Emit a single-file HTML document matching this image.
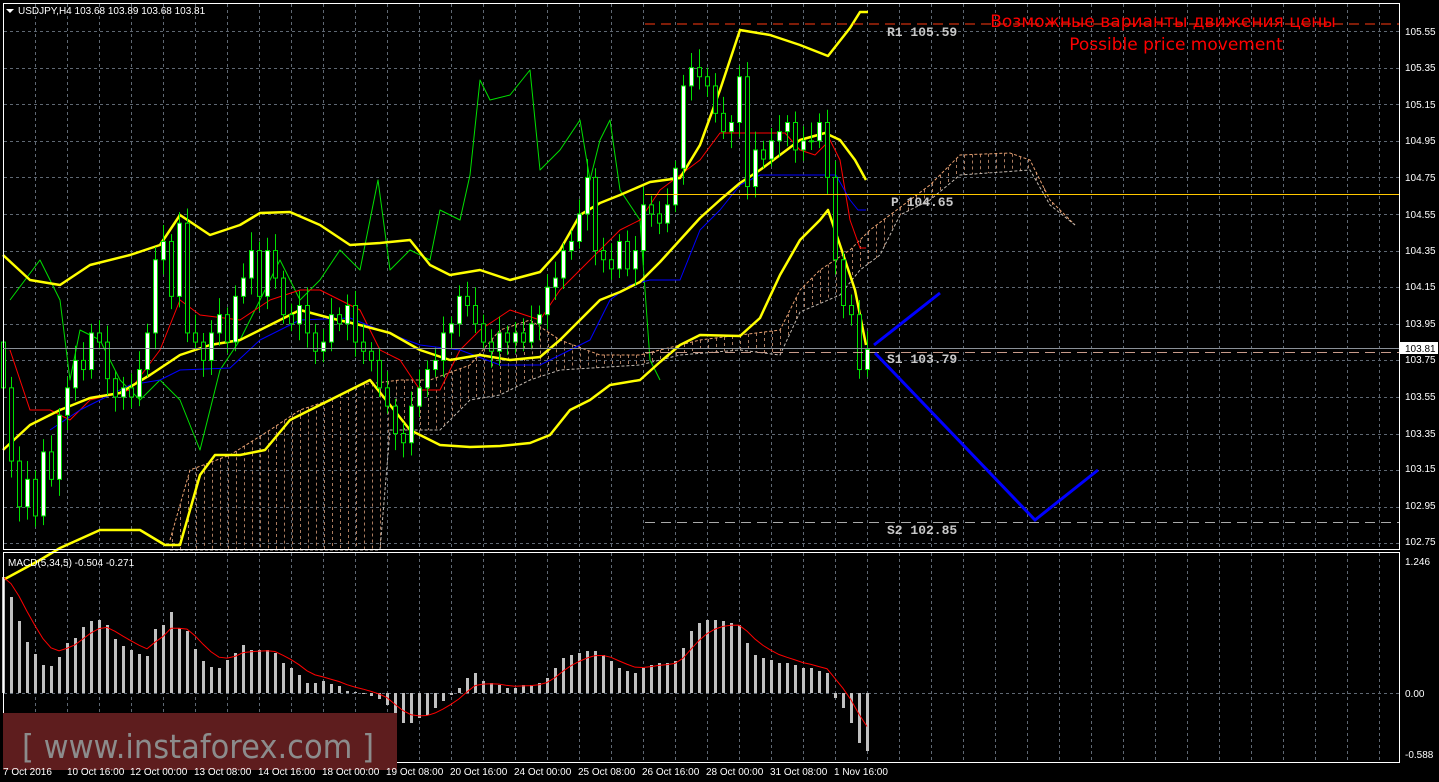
<!DOCTYPE html>
<html><head><meta charset="utf-8">
<style>
html,body{margin:0;padding:0;background:#000;width:1439px;height:782px;overflow:hidden}
svg{display:block}
.ax{font:10px "Liberation Sans",sans-serif;fill:#fff}
.lv{font:bold 13px "Liberation Mono",monospace;fill:#c8c8c8}
</style></head><body>
<svg id="s" width="1439" height="782" xmlns="http://www.w3.org/2000/svg">
<rect width="1439" height="782" fill="#000"/>
<g id="grid"></g>
<g id="cloud"></g>
<g id="lines"></g>
<g id="candles"></g>
<g id="macd"></g>
<rect x="3.5" y="3.5" width="1396" height="546" fill="none" stroke="#fff" stroke-width="1"/>
<rect x="3.5" y="552.5" width="1396" height="210" fill="none" stroke="#fff" stroke-width="1"/>
<line x1="645" y1="24" x2="1399" y2="24" stroke="#ff3a10" stroke-dasharray="10,6"/>
<line x1="645" y1="194.5" x2="1399" y2="194.5" stroke="#ffc800"/>
<line x1="645" y1="352.5" x2="1399" y2="352.5" stroke="#c89b8a" stroke-dasharray="10,6"/>
<line x1="645" y1="522.5" x2="1399" y2="522.5" stroke="#aaa" stroke-dasharray="10,6"/>
<line x1="3" y1="348.5" x2="1399" y2="348.5" stroke="#8a9098"/>
<text class="lv" x="887" y="36">R1 105.59</text>
<text class="lv" x="891" y="206">P 104.65</text>
<text class="lv" x="887" y="363">S1 103.79</text>
<text class="lv" x="887" y="534">S2 102.85</text>
<polyline points="874,345 940,293" fill="none" stroke="#0000ff" stroke-width="3"/>
<polyline points="875,353 1035,520 1098,470" fill="none" stroke="#0000ff" stroke-width="3"/>
<text x="1163" y="27" text-anchor="middle" font-family="'DejaVu Sans','Liberation Sans',sans-serif" font-size="17" fill="#ff0000">Возможные варианты движения цены</text>
<text x="1176" y="50" text-anchor="middle" font-family="'DejaVu Sans','Liberation Sans',sans-serif" font-size="17" fill="#ff0000">Possible price movement</text>
<polygon points="6,9 14,9 10,13" fill="#fff"/>
<text class="ax" x="18" y="14">USDJPY,H4  103.68 103.89 103.68 103.81</text>
<text class="ax" x="8" y="566">MACD(5,34,5) -0.504 -0.271</text>
<g class="ax">
<text x="1405" y="35">105.55</text><text x="1405" y="71">105.35</text><text x="1405" y="108">105.15</text>
<text x="1405" y="144">104.95</text><text x="1405" y="181">104.75</text><text x="1405" y="218">104.55</text>
<text x="1405" y="254">104.35</text><text x="1405" y="290">104.15</text><text x="1405" y="327">103.95</text>
<text x="1405" y="363">103.75</text><text x="1405" y="400">103.55</text><text x="1405" y="437">103.35</text>
<text x="1405" y="472">103.15</text><text x="1405" y="509">102.95</text><text x="1405" y="545">102.75</text>
<text x="1405" y="565">1.246</text><text x="1405" y="697">0.00</text><text x="1405" y="758">-0.588</text>
</g>
<rect x="1400" y="342" width="38" height="12" fill="#fff"/>
<text x="1405" y="352" font-family="'Liberation Sans',sans-serif" font-size="10" fill="#000">103.81</text>
<rect x="3" y="713" width="394" height="57" fill="#5e1d1e"/>
<text x="22" y="758" font-family="'DejaVu Sans','Liberation Sans',sans-serif" font-size="33" fill="#8c8c8c" textLength="352" lengthAdjust="spacingAndGlyphs">[ www.instaforex.com ]</text>
<g class="ax">
<text x="3" y="775">7 Oct 2016</text><text x="67" y="775">10 Oct 16:00</text><text x="130" y="775">12 Oct 00:00</text>
<text x="194" y="775">13 Oct 08:00</text><text x="258" y="775">14 Oct 16:00</text><text x="322" y="775">18 Oct 00:00</text>
<text x="386" y="775">19 Oct 08:00</text><text x="450" y="775">20 Oct 16:00</text><text x="514" y="775">24 Oct 00:00</text>
<text x="578" y="775">25 Oct 08:00</text><text x="642" y="775">26 Oct 16:00</text><text x="706" y="775">28 Oct 00:00</text>
<text x="770" y="775">31 Oct 08:00</text><text x="834" y="775">1 Nov 16:00</text>
</g>
</svg>
<script>
var NS="http://www.w3.org/2000/svg";
function el(p,t,a){var e=document.createElementNS(NS,t);for(var k in a)e.setAttribute(k,a[k]);document.getElementById(p).appendChild(e);return e;}
function Y(p){return 31+(105.55-p)*183;}
for(var x=35.5;x<1399;x+=32){el('grid','line',{x1:x,y1:4,x2:x,y2:549,stroke:'#5f6873','stroke-dasharray':'3,3'});el('grid','line',{x1:x,y1:553,x2:x,y2:762,stroke:'#5f6873','stroke-dasharray':'3,3'});}
for(var i=0;i<15;i++){var yy=Math.round(Y(105.55-0.2*i))+0.5;el('grid','line',{x1:4,y1:yy,x2:1399,y2:yy,stroke:'#5f6873','stroke-dasharray':'3,3'});}
el('grid','line',{x1:4,y1:693.5,x2:1399,y2:693.5,stroke:'#5f6873','stroke-dasharray':'3,3'});
function interp(pts,x){if(x<=pts[0][0])return pts[0][1];for(var i=1;i<pts.length;i++){if(x<=pts[i][0]){var a=pts[i-1],b=pts[i];return a[1]+(b[1]-a[1])*(x-a[0])/(b[0]-a[0]);}}return pts[pts.length-1][1];}
var cA=[[170,540],[190,470],[230,455],[270,430],[300,410],[330,400],[360,385],[400,380],[430,380],[470,365],[500,330],[530,320],[560,340],[600,355],[640,355],[680,345],[700,340],[740,335],[780,330],[800,290],[820,270],[850,250],[870,230],[890,215],[910,200],[930,185],[960,155],[1010,153],[1030,160],[1050,200],[1075,225]];
var cB=[[170,550],[380,550],[390,430],[440,430],[470,400],[500,395],[530,380],[560,370],[640,365],[680,355],[740,350],[780,355],[800,312],[840,295],[860,270],[880,255],[900,215],[930,200],[960,175],[1030,170],[1050,205],[1075,225]];
for(var x=172;x<=1072;x+=8){var a=interp(cA,x),b=interp(cB,x);el('cloud','line',{x1:x+0.5,y1:Math.min(a,b),x2:x+0.5,y2:Math.max(a,b),stroke:'#c89070','stroke-dasharray':'3,3','stroke-width':1,'stroke-opacity':0.85});}
function pl(pts,c,w){el('cloud','polyline',{points:pts.map(function(p){return p.join(',')}).join(' '),fill:'none',stroke:c,'stroke-width':w,'stroke-dasharray':'3,2'});}
pl(cA,'#e8a070',1);pl(cB,'#c0b8b0',1);
function line(pts,c,w){el('lines','polyline',{points:pts.map(function(p){return p.join(',')}).join(' '),fill:'none',stroke:c,'stroke-width':w,'stroke-linejoin':'round'});}
line([[10,300],[40,260],[60,300],[70,380],[80,330],[100,340],[120,380],[140,400],[160,380],[180,400],[200,450],[220,370],[240,340],[260,300],[280,260],[300,300],[320,280],[340,250],[360,270],[378,180],[390,270],[410,250],[430,260],[440,210],[460,220],[470,175],[480,80],[490,100],[510,95],[530,70],[540,170],[560,150],[580,120],[590,180],[600,140],[610,120],[620,190],[640,220],[650,360],[660,380]],'#00e000',1);
line([[10,350],[30,410],[50,410],[70,420],[90,400],[130,390],[160,350],[180,300],[200,315],[240,320],[270,300],[300,290],[320,290],[340,300],[360,310],[380,350],[400,360],[420,390],[440,390],[460,350],[480,330],[510,310],[540,320],[560,290],[580,270],[600,250],[620,230],[640,220],[660,190],[680,175],[700,160],[720,133],[760,133],[785,133],[800,150],[815,155],[830,140],[840,160],[850,220],[860,248],[866,248]],'#ff0000',1);
line([[50,430],[80,410],[100,400],[130,385],[160,380],[180,370],[230,368],[260,340],[300,320],[350,318],[380,330],[420,345],[460,350],[500,365],[540,365],[570,350],[590,340],[610,300],[630,285],[650,280],[680,280],[700,230],[720,210],[740,185],[760,175],[836,175],[850,200],[858,210],[866,210]],'#0000ff',1);
line([[3,255],[30,280],[60,285],[90,265],[130,255],[160,245],[180,215],[210,235],[240,225],[260,213],[290,212],[320,225],[350,245],[380,243],[410,240],[430,265],[450,275],[480,270],[510,280],[540,272],[560,250],[580,215],[600,203],[620,195],[650,182],[680,178],[700,145],[720,90],[740,30],[770,35],[800,45],[828,56],[850,28],[860,12],[868,12]],'#ffff00',2.5);
line([[3,450],[30,425],[60,410],[90,398],[120,393],[150,375],[180,355],[210,345],[240,340],[270,325],[300,310],[330,318],[360,325],[390,333],[420,350],[450,360],[480,355],[510,360],[540,357],[560,340],[580,320],[600,300],[620,292],[640,282],[660,262],[680,240],[700,218],[720,200],[740,183],[760,170],[780,155],[800,140],[825,133],[840,140],[855,160],[866,180]],'#ffff00',2.5);
line([[3,580],[40,560],[60,548],[100,530],[140,530],[165,545],[180,545],[200,475],[215,455],[240,455],[265,450],[290,420],[320,405],[350,390],[370,380],[390,405],[410,430],[440,445],[470,447],[500,446],[530,443],[550,435],[570,410],[590,400],[610,385],[640,380],[660,362],[680,345],[700,335],[740,336],[760,318],[780,275],[800,240],[820,220],[828,210],[840,245],[855,290],[866,345]],'#ffff00',2.5);
var C=[103.6,103.2,102.95,103.1,102.9,103.25,103.1,103.45,103.6,103.75,103.7,103.9,103.85,103.65,103.55,103.6,103.55,103.7,103.9,104.3,104.4,104.1,104.5,103.9,103.85,103.75,103.9,104.0,103.85,104.1,104.2,104.35,104.1,104.35,104.2,104.0,103.95,104.05,103.9,103.8,103.85,104.0,103.95,104.05,103.85,103.8,103.75,103.6,103.5,103.35,103.3,103.5,103.6,103.7,103.75,103.9,103.95,104.1,104.05,103.95,103.85,103.8,103.9,103.85,103.9,103.85,103.95,104.0,104.15,104.2,104.35,104.4,104.55,104.75,104.35,104.3,104.25,104.4,104.25,104.35,104.6,104.55,104.5,104.6,104.8,105.25,105.35,105.3,105.25,105.1,105.0,105.05,105.3,104.7,104.9,104.85,104.95,105.0,105.05,104.9,104.95,104.95,105.05,104.75,104.3,104.05,104.0,103.7,103.81];
var o=103.85;
for(var i=0;i<C.length;i++){var x=3+8*i,c=C[i];var r1=((i*37)%7)/100+0.04,r2=((i*53)%6)/100+0.04;var hi=Math.max(o,c)+r1,lo=Math.min(o,c)-r2;
el('candles','line',{x1:x+0.5,y1:Y(hi),x2:x+0.5,y2:Y(lo),stroke:'#00e000'});
var t=Y(Math.max(o,c)),b=Y(Math.min(o,c));if(b-t<1)b=t+1;
el('candles','rect',{x:x-1.5,y:t,width:4,height:b-t,fill:c>=o?'#fff':'#000',stroke:'#00e000','stroke-width':1});o=c;}
var M=[116,96,72,51,39,28,27,36,50,55,66,72,73,68,54,47,43,39,37,64,68,81,65,62,44,32,26,25,33,40,48,43,43,43,40,30,25,18,10,10,12,9,7,2,1,0,-3,-6,-12,-25,-30,-30,-25,-22,-15,-8,-2,5,15,20,12,10,8,5,5,8,8,10,15,25,35,38,40,42,42,38,32,25,22,20,25,28,30,30,32,45,62,70,73,73,72,70,68,50,38,35,33,30,30,28,25,25,22,20,-5,-15,-30,-50,-58];
var sig=[],s=M[0];
for(var i=0;i<M.length;i++){var x=3+8*i,v=M[i];el('macd','rect',{x:x-1,y:v>=0?693-v:693,width:3,height:Math.max(1,Math.abs(v)),fill:'#c0c0c0'});s=s+(v-s)/3;sig.push([x,693-s]);}
el('macd','polyline',{points:sig.map(function(p){return p.join(',')}).join(' '),fill:'none',stroke:'#ff0000','stroke-width':1});
</script>
</body></html>
